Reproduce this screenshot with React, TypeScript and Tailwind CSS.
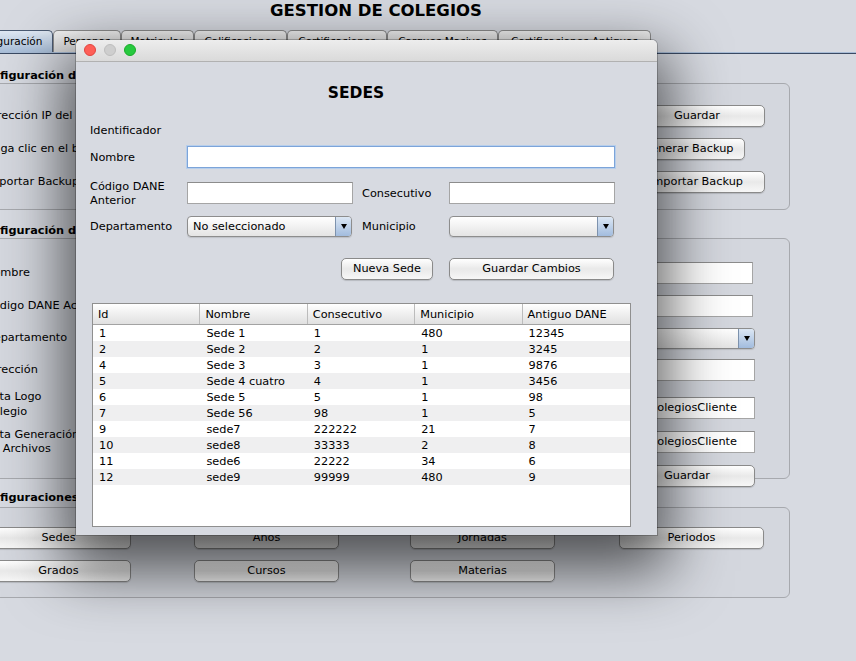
import React from "react";

type Props = { children?: React.ReactNode; className?: string };

function Boton({ children, className = "" }: Props) {
  return (
    <button className={`flex h-[22px] shrink-0 items-center justify-center rounded-[5px] border border-[#8a8a8a] bg-linear-to-b from-white via-[#e9e9e9] to-[#f7f7f7] pt-[1px] text-black shadow-[0_1px_1px_rgba(0,0,0,0.15)] ${className}`}>
      {children}
    </button>
  );
}

function Campo({ valor = "", foco = false, className = "" }: { valor?: string; foco?: boolean; className?: string }) {
  return (
    <div
      className={`flex h-[22px] shrink-0 items-center bg-white px-[4px] pt-[1px] ${
        foco ? "border border-[#7ca4d9] shadow-[0_0_0_1px_#b6ceec]" : "border border-[#a5a5a5] border-t-[#8c8c8c]"
      } ${className}`}
    >
      {valor}
    </div>
  );
}

function Combo({ valor = "", className = "" }: { valor?: string; className?: string }) {
  return (
    <div className={`flex h-[21px] shrink-0 overflow-hidden rounded-[4px] border border-[#8d8d8d] bg-linear-to-b from-white to-[#e4e4e4] shadow-[0_1px_1px_rgba(0,0,0,0.12)] ${className}`}>
      <span className="flex flex-1 items-center pl-[5px] pt-[1px]">{valor}</span>
      <span className="flex w-[16px] items-center justify-center border-l border-[#7d92ad] bg-linear-to-b from-[#dce7f4] to-[#a2bcde]">
        <span className="h-0 w-0 border-x-[3.5px] border-t-[5px] border-x-transparent border-t-black" />
      </span>
    </div>
  );
}

const pestanas = [
  { t: "Configuración", w: "-ml-[41px] w-[94px]", sel: true },
  { t: "Personas", w: "w-[68px]" },
  { t: "Matriculas", w: "w-[73px]" },
  { t: "Calificaciones", w: "w-[93px]" },
  { t: "Certificaciones", w: "w-[100px]" },
  { t: "Cargues Masivos", w: "w-[111px]" },
  { t: "Certificaciones Antiguas", w: "w-[153px]" },
];

const columnas = ["Id", "Nombre", "Consecutivo", "Municipio", "Antiguo DANE"];

const sedes = [
  ["1", "Sede 1", "1", "480", "12345"],
  ["2", "Sede 2", "2", "1", "3245"],
  ["4", "Sede 3", "3", "1", "9876"],
  ["5", "Sede 4 cuatro", "4", "1", "3456"],
  ["6", "Sede 5", "5", "1", "98"],
  ["7", "Sede 56", "98", "1", "5"],
  ["9", "sede7", "222222", "21", "7"],
  ["10", "sede8", "33333", "2", "8"],
  ["11", "sede6", "22222", "34", "6"],
  ["12", "sede9", "99999", "480", "9"],
];

function Ventana() {
  return (
    <div className="absolute left-[76px] top-[40px] flex h-[495px] w-[581px] flex-col overflow-hidden rounded-t-[5px] bg-[#d7dae1] shadow-[0_24px_60px_12px_rgba(0,0,0,0.62),0_0_0_1px_rgba(0,0,0,0.22)]">
      {/* barra de titulo */}
      <div className="flex h-[22px] shrink-0 items-center gap-[8px] border-b border-[#b1b1b1] bg-linear-to-b from-[#ededed] to-[#dadada] pb-[1px] pl-[8px]">
        <span className="h-[12px] w-[12px] rounded-full border border-[#e0443e] bg-[#fe5f57]" />
        <span className="h-[12px] w-[12px] rounded-full border border-[#bdbdbd] bg-[#cecece]" />
        <span className="h-[12px] w-[12px] rounded-full border border-[#1aab29] bg-[#27c93f]" />
      </div>

      <div className="pl-[14px]">
        <div className="mt-[21px] w-[532px] text-center text-[15.5px] font-bold leading-[20px]">SEDES</div>

        <div className="mt-[21px] h-[14px] leading-[14px]">Identificador</div>

        <div className="mt-[8px] flex h-[22px] items-center">
          <span className="w-[97px] pt-[2px]">Nombre</span>
          <Campo foco className="w-[428px]" />
        </div>

        <div className="mt-[14px] flex h-[22px] items-center">
          <span className="w-[97px] pt-[1px] leading-[14px]">
            Código DANE
            <br />
            Anterior
          </span>
          <Campo className="w-[166px]" />
          <span className="ml-[9px] w-[87px] pt-[2px]">Consecutivo</span>
          <Campo className="w-[166px]" />
        </div>

        <div className="mt-[12px] flex h-[21px] items-center">
          <span className="w-[97px] pt-[2px]">Departamento</span>
          <Combo valor="No seleccionado" className="w-[165px]" />
          <span className="ml-[10px] w-[87px] pt-[2px]">Municipio</span>
          <Combo className="w-[165px]" />
        </div>

        <div className="mt-[21px] flex">
          <Boton className="ml-[251px] w-[92px]">Nueva Sede</Boton>
          <Boton className="ml-[16px] w-[165px]">Guardar Cambios</Boton>
        </div>

        {/* tabla */}
        <div className="ml-[2px] mt-[23px] flex h-[224px] w-[539px] flex-col border border-[#8f8f8f] bg-white">
          <div className="grid h-[21px] shrink-0 grid-cols-5 border-b border-[#a3a3a3] bg-linear-to-b from-white to-[#e0e0e0]">
            {columnas.map((c) => (
              <div key={c} className="border-r border-[#bcbcbc] pl-[5px] pt-[1px] leading-[19px] last:border-r-0">
                {c}
              </div>
            ))}
          </div>
          {sedes.map((fila, i) => (
            <div key={fila[0]} className={`grid h-[16px] grid-cols-5 leading-[16px] ${i % 2 ? "bg-[#efeff0]" : ""}`}>
              {fila.map((v, j) => (
                <div key={j} className="pl-[6px] pt-[1px]">
                  {v}
                </div>
              ))}
            </div>
          ))}
        </div>
      </div>
    </div>
  );
}

export default function App() {
  return (
    <div className="relative h-[661px] w-[856px] overflow-hidden bg-[#d7dae1] text-[11.3px] text-black font-['DejaVu_Sans',sans-serif]">
      {/* ventana principal */}
      <div className="h-[29px] w-[752px] pt-[1px] text-center text-[16.5px] font-bold leading-[20px]">GESTION DE COLEGIOS</div>

      <div className="flex h-[23px] items-end">
        {pestanas.map((p) => (
          <div
            key={p.t}
            className={`flex h-[22px] shrink-0 items-center justify-center rounded-t-[5px] border border-b-0 text-[10.5px] ${p.w} ${
              p.sel
                ? "border-[#4b5b73] bg-linear-to-b from-[#dfe8f3] to-[#a9bed8]"
                : "border-[#8c8c8c] bg-linear-to-b from-[#f6f6f6] to-[#dcdcdc]"
            }`}
          >
            {p.t}
          </div>
        ))}
      </div>
      <div className="h-[2px] border-b border-[#3a4a63] bg-[#a8bcd6]" />

      <div className="-ml-[30px] w-[820px]">
        {/* panel 1 */}
        <div className="mt-[15px] h-[14px] pl-[6px] text-[11.3px] font-bold leading-[14px]">Configuración del servidor</div>
        <div className="h-[127px] rounded-[6px] border border-[#a7a9ae] bg-[#d4d7de] pt-[21px]">
          <div className="flex h-[22px] items-center justify-between pl-[14px]">
            <span>Dirección IP del servidor</span>
            <Boton className="mr-[24px] w-[136px]">Guardar</Boton>
          </div>
          <div className="mt-[11px] flex h-[22px] items-center justify-between pl-[14px]">
            <span>Haga clic en el botón para generar el backup</span>
            <Boton className="mr-[44px] w-[114px]">Generar Backup</Boton>
          </div>
          <div className="mt-[11px] flex h-[22px] items-center justify-between pl-[14px]">
            <span>Importar Backup</span>
            <Boton className="mr-[24px] w-[138px]">Importar Backup</Boton>
          </div>
        </div>

        {/* panel 2 */}
        <div className="mt-[14px] h-[14px] pl-[6px] text-[11.3px] font-bold leading-[14px]">Configuración del colegio</div>
        <div className="h-[241px] rounded-[6px] border border-[#a7a9ae] bg-[#d4d7de] pt-[23px]">
          <div className="flex h-[22px] items-center justify-between pl-[14px]">
            <span>Nombre</span>
            <Campo className="mr-[36px] w-[560px]" />
          </div>
          <div className="mt-[11px] flex h-[22px] items-center justify-between pl-[14px]">
            <span>Código DANE Actual</span>
            <Campo className="mr-[36px] w-[560px]" />
          </div>
          <div className="mt-[11px] flex h-[21px] items-center justify-between pl-[14px]">
            <span>Departamento</span>
            <Combo className="mr-[34px] w-[560px]" />
          </div>
          <div className="mt-[10px] flex h-[22px] items-center justify-between pl-[14px]">
            <span>Dirección</span>
            <Campo className="mr-[34px] w-[560px]" />
          </div>
          <div className="mt-[16px] flex h-[22px] items-center justify-between pl-[14px]">
            <span className="mb-[9px] leading-[15px]">
              Ruta Logo
              <br />
              Colegio
            </span>
            <Campo valor="/Users/Shared/ColegiosCliente" className="mr-[34px] w-[560px] justify-end pr-[17px]" />
          </div>
          <div className="mt-[12px] flex h-[22px] items-center justify-between pl-[14px]">
            <span className="leading-[14px]">
              Ruta Generación
              <br />
              de Archivos
            </span>
            <Campo valor="/Users/Shared/ColegiosCliente" className="mr-[34px] w-[560px] justify-end pr-[17px]" />
          </div>
          <div className="mt-[12px] flex justify-end">
            <Boton className="mr-[34px] w-[136px]">Guardar</Boton>
          </div>
        </div>

        {/* panel 3 */}
        <div className="mt-[12px] h-[14px] pl-[6px] text-[11.3px] font-bold leading-[14px]">Configuraciones</div>
        <div className="mt-[2px] h-[91px] rounded-[6px] border border-[#a7a9ae] bg-[#d4d7de] pt-[19px]">
          <div className="flex pl-[15px]">
            <Boton className="w-[145px]">Sedes</Boton>
            <Boton className="ml-[63px] w-[145px]">Años</Boton>
            <Boton className="ml-[71px] w-[145px]">Jornadas</Boton>
            <Boton className="ml-[64px] w-[145px]">Periodos</Boton>
          </div>
          <div className="mt-[11px] flex pl-[15px]">
            <Boton className="w-[145px]">Grados</Boton>
            <Boton className="ml-[63px] w-[145px]">Cursos</Boton>
            <Boton className="ml-[71px] w-[145px]">Materias</Boton>
          </div>
        </div>
      </div>

      <Ventana />
    </div>
  );
}
